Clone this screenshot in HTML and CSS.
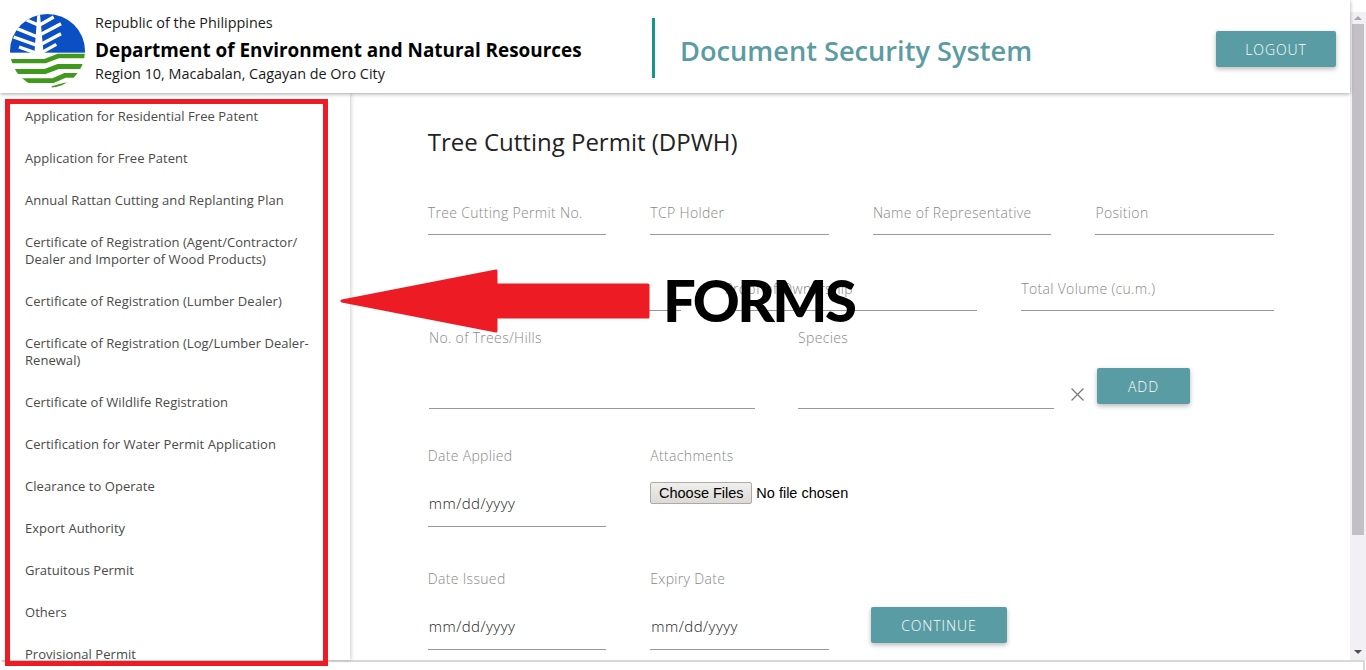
FILE: index.html
```html
<!DOCTYPE html>
<html lang="en">
<head>
<meta charset="utf-8">
<title>Document Security System</title>
<link rel="stylesheet" href="styles.css">
</head>
<body>
<div class="page">
  <div class="top">
    <div class="app">
      <header class="header">
        <svg class="logo" viewBox="15 15 225 222" width="75" height="74" aria-label="DENR logo">
          <defs><clipPath id="disc"><ellipse cx="127.5" cy="126" rx="112.5" ry="111"/></clipPath></defs>
          <g clip-path="url(#disc)">
            <rect x="0" y="0" width="260" height="131" fill="#0b4fc4"/>
            <path d="M15 150 H118 L158 134 H240 V148 H162 L122 163 H15Z" fill="#3f9a1c"/>
            <path d="M15 180 H118 L158 165 H240 V180 H162 L122 195 H15Z" fill="#3f9a1c"/>
            <path d="M15 208 H142 L178 192 H240 V206 H182 L146 222 H15Z" fill="#3f9a1c"/>
            <path d="M140 232 L178 221 H200 V226 L170 237 H140Z" fill="#3f9a1c"/>
            <g stroke="#fff" stroke-width="10" fill="none">
              <path d="M58 30 L98 47"/><path d="M34 58 L98 84"/><path d="M26 84 L98 110"/><path d="M42 114 L98 134"/>
              <path d="M104 48 L146 24"/><path d="M104 78 L168 44"/><path d="M104 108 L168 74"/><path d="M104 134 L154 106"/>
            </g>
            <path d="M97 16 H105 L116 136 H88Z" fill="#fff"/>
          </g>
        </svg>
        <div class="org">
          <div class="org-line">Republic of the Philippines</div>
          <div class="org-name">Department of Environment and Natural Resources</div>
          <div class="org-line">Region 10, Macabalan, Cagayan de Oro City</div>
        </div>
        <div class="system">Document Security System</div>
        <button class="btn btn-logout" type="button">Logout</button>
      </header>
      <div class="body">
        <nav class="side">
          <a class="side-item">Application for Residential Free Patent</a>
          <a class="side-item">Application for Free Patent</a>
          <a class="side-item">Annual Rattan Cutting and Replanting Plan</a>
          <a class="side-item">Certificate of Registration (Agent/Contractor/<br>Dealer and Importer of Wood Products)</a>
          <a class="side-item">Certificate of Registration (Lumber Dealer)</a>
          <a class="side-item">Certificate of Registration (Log/Lumber Dealer-<br>Renewal)</a>
          <a class="side-item">Certificate of Wildlife Registration</a>
          <a class="side-item">Certification for Water Permit Application</a>
          <a class="side-item">Clearance to Operate</a>
          <a class="side-item">Export Authority</a>
          <a class="side-item">Gratuitous Permit</a>
          <a class="side-item">Others</a>
          <a class="side-item">Provisional Permit</a>
        </nav>
        <main class="main">
          <h1 class="title">Tree Cutting Permit (DPWH)</h1>
          <form class="form">
            <div class="row row-four">
              <label class="field"><span class="label">Tree Cutting Permit No.</span><input class="input input-short" type="text"></label>
              <label class="field"><span class="label">TCP Holder</span><input class="input input-short" type="text"></label>
              <label class="field"><span class="label">Name of Representative</span><input class="input input-short" type="text"></label>
              <label class="field"><span class="label">Position</span><input class="input input-short" type="text"></label>
            </div>
            <div class="row row-three">
              <label class="field"><span class="label">Location</span><input class="input input-short" type="text"></label>
              <label class="field"><span class="label">Proof of Ownership</span><input class="input input-short" type="text"></label>
              <label class="field"><span class="label">Total Volume (cu.m.)</span><input class="input input-short" type="text"></label>
            </div>
            <div class="row row-species">
              <label class="field field-trees"><span class="label">No. of Trees/Hills</span><input class="input" type="text"></label>
              <label class="field field-species"><span class="label">Species</span><input class="input" type="text"></label>
              <svg class="remove" viewBox="0 0 12 12" width="13" height="13" aria-label="Remove"><path d="M.5.5 L11.5 11.5 M11.5.5 L.5 11.5" stroke="#777" stroke-width="1.1" fill="none"/></svg>
              <button class="btn btn-add" type="button">Add</button>
            </div>
            <div class="row row-four row-dates">
              <label class="field"><span class="label">Date Applied</span><input class="input" type="text" value="mm/dd/yyyy"></label>
              <div class="field"><span class="label">Attachments</span><input class="file" type="file" multiple></div>
            </div>
            <div class="row row-four row-issued">
              <label class="field"><span class="label">Date Issued</span><input class="input" type="text" value="mm/dd/yyyy"></label>
              <label class="field"><span class="label">Expiry Date</span><input class="input" type="text" value="mm/dd/yyyy"></label>
              <button class="btn btn-continue" type="button">Continue</button>
            </div>
          </form>
        </main>
      </div>
    </div>
    <div class="scrollbar">
      <span class="arrow arrow-up"></span>
      <span class="thumb"></span>
      <span class="arrow arrow-down"></span>
    </div>
  </div>
  <div class="strip"></div>
  <div class="annot-box"></div>
  <svg class="annot-arrow" viewBox="0 0 312 66" width="312" height="66" aria-hidden="true">
    <path d="M3 32 L157 2 V16 H309 V48 H157 V62Z" fill="#ed1c24" stroke="#ed1c24" stroke-width="3" stroke-linejoin="round"/>
  </svg>
  <div class="annot-text">FORMS</div>
</div>
</body>
</html>
```
FILE: styles.css
```css
* { box-sizing: border-box; }
html, body { margin: 0; padding: 0; height: 100%; overflow: hidden; background: #fff; }
body { font-family: "Open Sans", "Liberation Sans", sans-serif; color: #222; }

.page { position: relative; display: flex; flex-direction: column; height: 670px; }
.top { display: flex; height: 660px; }
.app { width: 1350px; display: flex; flex-direction: column; min-width: 0; }

.header {
  position: relative; z-index: 2; flex: none; height: 93px; display: flex; align-items: center;
  background: #fff; box-shadow: 0 1px 4px rgba(0,0,0,.35);
}
.logo { flex: none; margin: 9px 0 0 10px; }
.org { width: 557px; margin-left: 10px; padding-top: 4px; color: #1a1a1a; }
.org-line { font-size: 14.4px; line-height: 18px; }
.org-name { padding-top: 4px; font-size: 18.9px; line-height: 29px; font-weight: 700; color: #000; }
.system {
  flex: none; width: 564px; height: 60px; margin-top: 3px; padding-left: 25px; border-left: 3px solid #16948f;
  font-size: 27.2px; line-height: 66px; font-weight: 600; color: #5b9ca3;
}
.btn {
  border: 0; border-radius: 2px; background: #5a9ca4; color: #fff; font-family: inherit; font-weight: 300;
  font-size: 14px; letter-spacing: .9px; text-transform: uppercase; height: 36px;
  box-shadow: 0 2px 5px rgba(0,0,0,.28);
}
.btn-logout { width: 120px; flex: none; margin-top: 4px; padding-bottom: 0; }
.btn-add { width: 93px; margin-left: 13px; margin-top: 40px; align-self: flex-start; flex: none; }
.btn-continue { width: 136px; margin-left: -2px; margin-top: 38px; align-self: start; }

.body { flex: 1; display: flex; min-height: 0; }
.side {
  flex: none; width: 350px; padding-top: 2px; overflow: hidden; background: #fff;
  box-shadow: 1px 0 4px rgba(0,0,0,.2); position: relative; z-index: 1;
}
.side-item { display: block; padding: 12.5px 0 12.5px 25px; font-size: 13px; line-height: 17px; letter-spacing: .04px; color: #4a4a4a; }

.main { flex: 1; min-width: 0; padding: 32px 76px 0 77.75px; overflow: hidden; }
.title { margin: 0 0 44px; font-size: 24px; line-height: 34px; font-weight: 400; color: #222; }
.form { display: flex; flex-direction: column; }
.row { display: grid; column-gap: 44px; }
.row-four { grid-template-columns: repeat(4, 1fr); }
.row-three { grid-template-columns: repeat(3, 1fr); margin-top: 44px; }
.row-species { display: flex; margin-top: 17px; padding-left: 1.25px; column-gap: 0; }
.row-dates { margin-top: 37px; }
.row-issued { margin-top: 42px; }
.field { display: flex; flex-direction: column; min-width: 0; }
.field-trees { width: 326px; }
.field-species { width: 256px; margin-left: 43px; }
.label { font-size: 14px; line-height: 20px; font-weight: 300; letter-spacing: .33px; color: #888; }
.input {
  display: block; width: 100%; height: 61px; padding: 13px 0 0 1px; border: 0; border-bottom: 1px solid #999; border-radius: 0;
  background: transparent; font-family: inherit; font-size: 15px; font-weight: 300; color: #222; letter-spacing: .45px; outline: none;
}
.input-short { height: 12px; padding: 0; }
.file { width: 230px; margin-top: 16px; font-family: "Liberation Sans", sans-serif; font-size: 14.5px; color: #000; }
.file::file-selector-button {
  height: 22px; width: 102px; margin-right: 4px; padding: 0; border: 1px solid #aaa; border-radius: 2px; background: linear-gradient(#f0efed, #dcdad5);
  font: inherit; color: #000;
}
.remove { flex: none; margin: 60px 0 0 17px; }

.scrollbar {
  flex: none; width: 16px; margin-top: 12px; background: #f3f0f5; display: flex; flex-direction: column; align-items: center; position: relative;
}
.arrow { flex: none; width: 0; height: 0; border-left: 4px solid transparent; border-right: 4px solid transparent; }
.arrow-up { margin-top: 4px; border-bottom: 4px solid #a8a8a8; }
.thumb { flex: none; width: 12px; height: 511px; margin-top: 4px; background: #c2c0c4; }
.arrow-down { margin-top: auto; margin-bottom: 6px; border-top: 4px solid #505050; }

.strip { flex: none; height: 10px; margin: 0 1px 0 2px; border-top: 2px solid #d8d8d8; border-right: 2px solid #d8d8d8; }

.annot-box { position: absolute; left: 5px; top: 99px; width: 323px; height: 567px; border: 5px solid #ed1c24; z-index: 5; }
.annot-arrow { position: absolute; left: 339px; top: 269px; z-index: 5; }
.annot-text {
  position: absolute; left: 663px; top: 265px; z-index: 5; font-family: Lato, sans-serif; font-weight: 900; font-size: 58px; line-height: 70px; color: #000; letter-spacing: -2.6px;
}
```
